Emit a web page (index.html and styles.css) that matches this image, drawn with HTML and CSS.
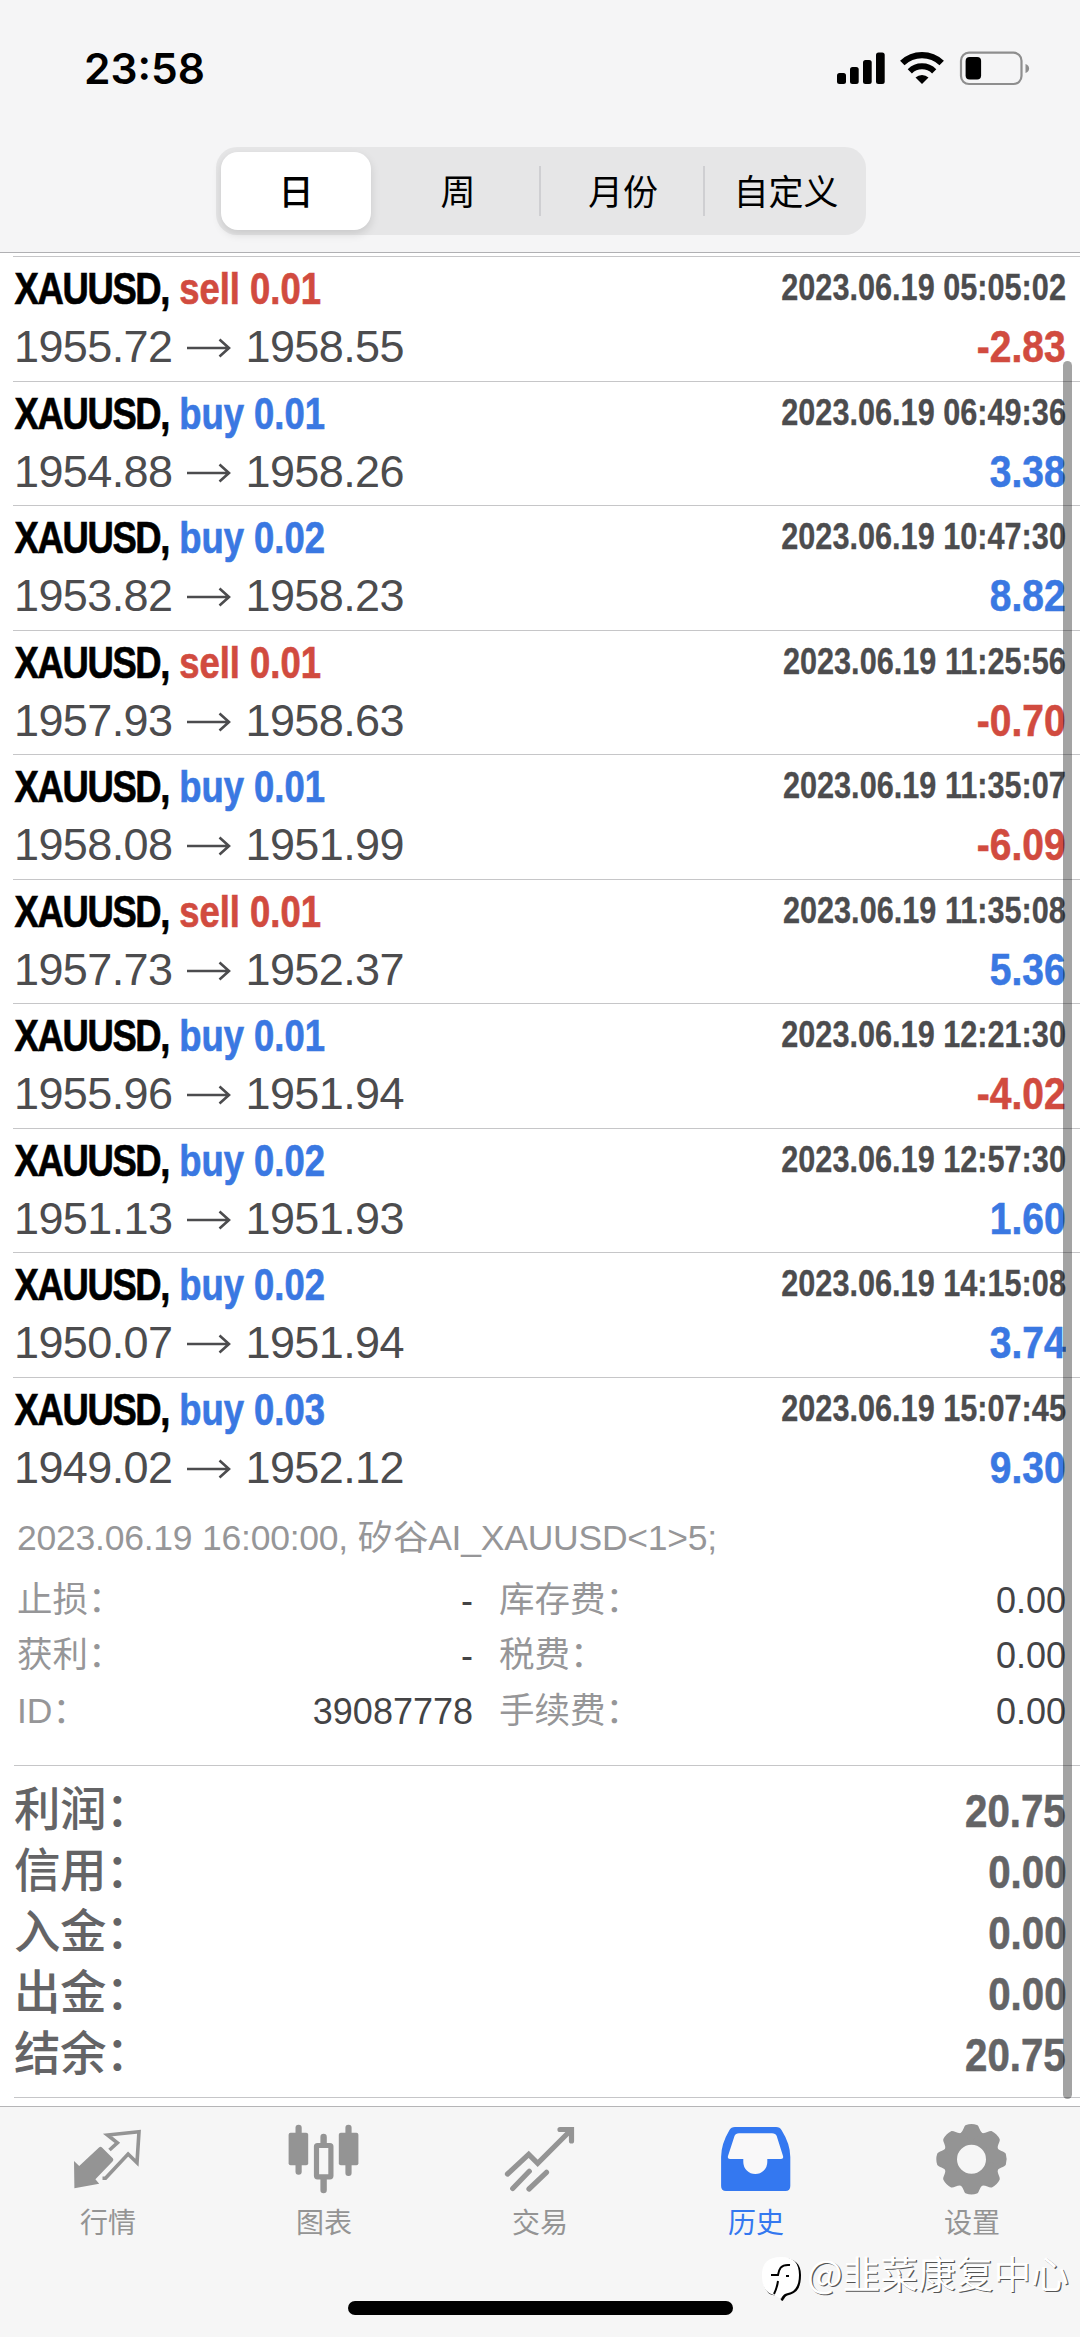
FILE: index.html
```html
<!DOCTYPE html>
<html lang="zh-CN">
<head>
<meta charset="utf-8">
<title>历史</title>
<link rel="stylesheet" href="styles.css">
</head>
<body>
<div class="screen">
  <header class="top">
    <div class="status">
      <span class="clock">23:58</span>
      <svg class="status-icons" viewBox="837 51 193 35">
        <rect x="837" y="73" width="9" height="11" rx="2.5"/>
        <rect x="850" y="67" width="8.7" height="17" rx="2.5"/>
        <rect x="863" y="60" width="8.7" height="24" rx="2.5"/>
        <rect x="876" y="52.5" width="8.7" height="31.5" rx="2.5"/>
        <path d="M902.3 63a28.5 28.5 0 0 1 39.4 0" fill="none" stroke="#000" stroke-width="6.4"/>
        <path d="M909.8 71.300a17.500 17.500 0 0 1 24.400 0" fill="none" stroke="#000" stroke-width="6"/>
        <path d="M915.500 77.500a9.500 9.500 0 0 1 13 0L922 84Z"/>
        <rect x="961" y="52.700" width="60.500" height="31.300" rx="8" fill="none" stroke="#8e8e8e" stroke-width="2.200"/>
        <rect x="965.600" y="57" width="15.500" height="22.500" rx="4"/>
        <path d="M1025.500 64q3.600 1.200 3.600 4.500t-3.600 4.500Z" fill="#8e8e8e"/>
      </svg>
    </div>
    <nav class="segments">
      <span class="segment selected">日</span>
      <span class="segment week">周</span>
      <span class="segment ruled month">月份</span>
      <span class="segment ruled custom">自定义</span>
    </nav>
  </header>

  <main class="history">
    <div class="deals" id="deals"></div>
    <section class="detail">
      <p class="comment">2023.06.19 16:00:00, 矽谷AI_XAUUSD&lt;1&gt;5;</p>
      <dl class="fees">
        <dt>止损：</dt><dd>-</dd><dt>库存费：</dt><dd>0.00</dd>
        <dt>获利：</dt><dd>-</dd><dt>税费：</dt><dd>0.00</dd>
        <dt>ID：</dt><dd>39087778</dd><dt>手续费：</dt><dd>0.00</dd>
      </dl>
    </section>
    <section class="summary">
      <div class="total"><span>利润：</span><b>20.75</b></div>
      <div class="total"><span>信用：</span><b>0.00</b></div>
      <div class="total"><span>入金：</span><b>0.00</b></div>
      <div class="total"><span>出金：</span><b>0.00</b></div>
      <div class="total"><span>结余：</span><b>20.75</b></div>
    </section>
    <div class="scrollbar"></div>
  </main>

  <footer class="bottom">
    <nav class="tabs">
      <a class="tab">
        <svg viewBox="0 0 72 72">
          <path d="M2 37L7.200 42 27 23.500Q28.500 22 30 23.500L41 34.500Q42 36 40.500 37.500L23.400 55.300 27.200 59.700 2.400 64.300Z" fill="currentColor"/>
          <path d="M30.500 54.300H33.500L56.100 30 65 38.700 67 7.700 35.500 11 45.400 18.800 37.500 26" fill="none" stroke="currentColor" stroke-width="3.600"/>
        </svg>
        <span>行情</span>
      </a>
      <a class="tab">
        <svg viewBox="0 0 72 72" fill="currentColor">
          <rect x=".6" y="8.700" width="19.600" height="32.600" rx="2"/>
          <rect x="7.500" y=".7" width="6.200" height="50" rx="3"/>
          <rect x="28.500" y="21.500" width="14.400" height="31.300" rx="1" fill="none" stroke="currentColor" stroke-width="5.200"/>
          <path d="M32.400 20V13a3.200 3.200 0 0 1 6.400 0V20ZM32.400 54V66a3.200 3.200 0 0 0 6.400 0V54Z"/>
          <rect x="50.800" y="8.700" width="19.600" height="32.600" rx="2"/>
          <rect x="57.400" y=".7" width="6.200" height="51.300" rx="3"/>
        </svg>
        <span>图表</span>
      </a>
      <a class="tab">
        <svg viewBox="0 0 72 72" fill="none" stroke="currentColor" stroke-width="5.200" stroke-linecap="round">
          <path d="M3.500 50 24.700 30.300 33.700 39.300 67 6M56 5.500H67.500V17M25.300 47.300 8.700 64.500M42.500 48.300 25 65"/>
        </svg>
        <span>交易</span>
      </a>
      <a class="tab active">
        <svg viewBox="0 0 72 72">
          <path d="M15 3H56Q60 3 61.500 6Q70.300 20 70.300 33V62Q70.300 67 65.500 67H6Q1.100 67 1.100 62V33Q1.100 20 9.500 6Q11 3 15 3Z" fill="currentColor"/>
          <path d="M19 9.300H52Q55.500 9.300 56.700 12L63 32Q63.800 35 61 35H47.300V38a12 12 0 0 1-24 0V35H10Q7.200 35 8 32L14.500 12Q15.700 9.300 19 9.300Z" fill="#f9f8f9"/>
        </svg>
        <span>历史</span>
      </a>
      <a class="tab">
        <svg viewBox="0 0 72 72" fill="currentColor">
          <defs><path id="tooth" d="M23 10C27.500 8.500 27.500 2 30 1Q35.500-.8 41 1C43.500 2 43.500 8.500 48 10V20H23Z"/></defs>
          <circle cx="35.500" cy="35.300" r="21" fill="none" stroke="currentColor" stroke-width="13"/>
          <use href="#tooth"/>
          <use href="#tooth" transform="rotate(45 35.500 35.300)"/>
          <use href="#tooth" transform="rotate(90 35.500 35.300)"/>
          <use href="#tooth" transform="rotate(135 35.500 35.300)"/>
          <use href="#tooth" transform="rotate(180 35.500 35.300)"/>
          <use href="#tooth" transform="rotate(225 35.500 35.300)"/>
          <use href="#tooth" transform="rotate(270 35.500 35.300)"/>
          <use href="#tooth" transform="rotate(315 35.500 35.300)"/>
        </svg>
        <span>设置</span>
      </a>
    </nav>
    <div class="home-bar"></div>
    <div class="watermark">
      <svg viewBox="0 0 41 46">
        <path d="M20 1C33 1 39 7 39 18 39 32 34 36 27 38 22 39 22 44 20 44 18 42 18 40 16 37 10 41 1 35 1 20 1 7 7 1 20 1Z" fill="#000"/>
        <path d="M19 0C32 0 37 6 37 18 37 30 32 35 26 36 21 37 20 40 19 42L12 38C4 36 0 30 0 18 0 6 6 0 19 0Z" fill="#fff"/>
        <path d="M28 8C18 7 17 13 16 18H9M16 24Q15 31 12 37M24 19h3" fill="none" stroke="#000" stroke-width="2"/>
      </svg>
      <span>@韭菜康复中心</span>
    </div>
  </footer>
</div>
<script src="deals.js"></script>
</body>
</html>
```
FILE: styles.css
```css
* { box-sizing: border-box; }
body {
  margin: 0;
  background: #fff;
  font-family: "Liberation Sans", "Noto Sans CJK SC", sans-serif;
}
p, dl, dd { margin: 0; }
.screen {
  width: 1080px;
  height: 2337px;
  display: flex;
  flex-direction: column;
  overflow: hidden;
}

/* status bar and period switch */
.top {
  height: 253px;
  flex: none;
  background: #f5f5f6;
  border-bottom: 1px solid #b0b0b3;
}
.status {
  height: 147px;
  padding: 0 50px 0 84px;
  display: flex;
  justify-content: space-between;
}
.clock {
  margin-top: 44px;
  font: 600 42.5px/50px Inter, sans-serif;
}
.status-icons { width: 193px; height: 35px; margin-top: 51px; }
.segments {
  width: 650px;
  height: 88px;
  margin-left: 216px;
  padding: 5px;
  display: grid;
  grid-template-columns: 150px 168px 164px 1fr;
  background: #e6e6e7;
  border-radius: 21px;
}
.segment {
  display: flex;
  align-items: center;
  justify-content: center;
  padding-bottom: 2px;
  font: 400 35px/50px "Noto Sans CJK SC", sans-serif;
}
.segment.selected {
  background: #fff;
  border-radius: 17px;
  font-weight: 500;
  box-shadow: 0 4px 10px rgba(0, 0, 0, .13);
}
.segment.week { padding-left: 6px; }
.segment.month { padding-left: 4px; }
.segment.custom { padding-left: 8px; }
.segment.ruled {
  background: linear-gradient(#cfcfd2, #cfcfd2) left center / 2px 50px no-repeat;
}

/* closed deals */
.history {
  position: relative;
  height: 1853px;
  flex: none;
  padding-top: 3px;
}
.deal {
  height: 124.56px;
  margin-left: 13px;
  padding: 3px 14px 0 0;
  border-top: 1px solid #c6c6c8;
  display: grid;
  grid-template: 58px 57px / 1fr auto;
  white-space: nowrap;
}
.title {
  justify-self: start;
  padding-left: 2px;
  font-weight: bold;
  font-size: 45px;
  line-height: 57px;
  transform: scaleX(.81);
  transform-origin: left;
  -webkit-text-stroke: .7px;
}
.symbol { letter-spacing: -1.7px; }
.time {
  font-weight: bold;
  font-size: 36.5px;
  line-height: 56px;
  color: #4c4c4e;
  transform: scaleX(.84);
  transform-origin: right;
  -webkit-text-stroke: .3px;
}
.prices {
  display: flex;
  align-items: center;
  padding-left: 1px;
  font-size: 45px;
  line-height: 57px;
  letter-spacing: -.6px;
  color: #4c4c4e;
}
.prices svg { width: 44px; height: 20px; margin: 3px 14px 0 15px; }
.profit {
  justify-self: end;
  font-weight: bold;
  font-size: 45px;
  line-height: 57px;
  transform: scaleX(.865);
  transform-origin: right;
  -webkit-text-stroke: .6px;
}
.red { color: #d14b3f; }
.blue { color: #3a78e2; }

/* expanded deal */
.detail { height: 263.400px; padding: 12px 14px 0 17px; }
.comment {
  height: 59.600px;
  font-size: 35.500px;
  line-height: 50px;
  letter-spacing: -.23px;
  white-space: nowrap;
  color: #969698;
}
.fees {
  display: grid;
  grid-template-columns: 100px 356px 160px 1fr;
  grid-auto-rows: 55.300px;
  font-size: 36px;
  line-height: 55px;
  white-space: nowrap;
}
.fees dt { color: #969698; font-size: 35.5px; }
.fees dt:nth-of-type(even) { padding-left: 26px; }
.fees dd { text-align: right; color: #444446; }

/* totals */
.summary {
  height: 333px;
  margin-left: 14px;
  padding: 14px 14px 0 0;
  border: solid #c6c6c8;
  border-width: 1px 0;
}
.total {
  height: 61px;
  display: flex;
  justify-content: space-between;
  font-size: 47px;
  line-height: 61px;
  color: #646466;
}
.total span { font-weight: 500; letter-spacing: -.6px; font-size: 46.5px; }
.total b { transform: scaleX(.855); transform-origin: right; -webkit-text-stroke: .6px; }

.scrollbar {
  position: absolute;
  left: 1063px;
  top: 108px;
  width: 9px;
  height: 1738px;
  border-radius: 5px;
  background: rgba(0, 0, 0, .36);
}

/* tab bar */
.bottom {
  position: relative;
  flex: 1;
  background: #f6f6f6;
  border-top: 1px solid #b5b5b7;
}
.tabs { display: grid; grid-template-columns: repeat(5, 1fr); height: 194px; }
.tab {
  display: flex;
  flex-direction: column;
  align-items: center;
  padding-top: 17px;
  color: #949494;
  font-size: 28px;
  line-height: 40px;
}
.tab svg { width: 72px; height: 72px; margin-bottom: 8px; }
.tab.active { color: #3478f0; }
.home-bar { width: 385px; height: 14px; margin: 0 auto; border-radius: 7px; background: #000; }
.watermark {
  position: absolute;
  left: 762px;
  top: 145px;
  display: flex;
  align-items: flex-start;
  gap: 4px;
  color: #fff;
  font: 400 37.700px/50px "Noto Sans CJK SC", sans-serif;
  text-shadow: 1.200px 1.200px .5px #555;
  white-space: nowrap;
}
.watermark svg { width: 41px; height: 46px; margin-top: 5px; }
.watermark span { margin-top: -5px; }
```
FILE: deals.js
```js
const deals = [
  ["sell", "0.01", "1955.72", "1958.55", "05:05:02", "-2.83"],
  ["buy", "0.01", "1954.88", "1958.26", "06:49:36", "3.38"],
  ["buy", "0.02", "1953.82", "1958.23", "10:47:30", "8.82"],
  ["sell", "0.01", "1957.93", "1958.63", "11:25:56", "-0.70"],
  ["buy", "0.01", "1958.08", "1951.99", "11:35:07", "-6.09"],
  ["sell", "0.01", "1957.73", "1952.37", "11:35:08", "5.36"],
  ["buy", "0.01", "1955.96", "1951.94", "12:21:30", "-4.02"],
  ["buy", "0.02", "1951.13", "1951.93", "12:57:30", "1.60"],
  ["buy", "0.02", "1950.07", "1951.94", "14:15:08", "3.74"],
  ["buy", "0.03", "1949.02", "1952.12", "15:07:45", "9.30"],
];
document.getElementById("deals").innerHTML = deals.map(([side, lots, open, close, time, profit]) => `
  <article class="deal">
    <div class="title"><span class="symbol">XAUUSD,</span> <span class="${side === "buy" ? "blue" : "red"}">${side} ${lots}</span></div>
    <div class="time">2023.06.19 ${time}</div>
    <div class="prices"><span>${open}</span>
      <svg viewBox="0 0 44 20" fill="none" stroke="currentColor" stroke-width="2.6"><path d="M0 10H42M32.500 1.500 42 10 32.500 18.500"/></svg>
      <span>${close}</span></div>
    <div class="profit ${profit.startsWith("-") ? "red" : "blue"}">${profit}</div>
  </article>`).join("");
```
